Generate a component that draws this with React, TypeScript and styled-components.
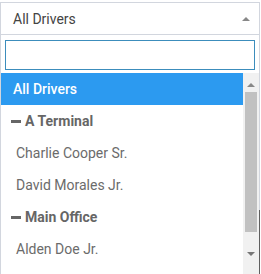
import React from "react";
import styled, { createGlobalStyle } from "styled-components";

const Global = createGlobalStyle`
  html, body { margin: 0; padding: 0; background: #fff; }
  body { font-family: Roboto, "Liberation Sans", sans-serif; overflow: hidden; }
`;

const Wrapper = styled.div`
  padding-top: 2px;
  width: 260px;
  position: relative;
`;

const Header = styled.div`
  height: 31px;
  border: 1px solid #d2d6de;
  display: flex;
  align-items: center;
  justify-content: space-between;
  padding: 0 9px 0 12px;
  font-size: 14px;
  color: #444;
`;

const Caret = styled.span<{ $down?: boolean }>`
  width: 0;
  height: 0;
  border-left: 4px solid transparent;
  border-right: 4px solid transparent;
  ${(p) => (p.$down ? "border-top: 4px solid #777;" : "border-bottom: 4px solid #888;")}
`;

const Dropdown = styled.div`
  position: relative;
  border: 1px solid #d2d6de;
  border-top: none;
  height: 240px;
  display: flex;
  flex-direction: column;

  &::after {
    content: "";
    position: absolute;
    right: -1px;
    top: 175px;
    bottom: 0;
    width: 1px;
    background: #5f5f5f;
  }
`;

const SearchBox = styled.div`
  padding: 5px 4px 3px 4px;
`;

const SearchInput = styled.input`
  display: block;
  box-sizing: border-box;
  width: 100%;
  height: 30px;
  margin: 0;
  border: 1px solid #3c8dbc;
  outline: none;
  font: inherit;
  font-size: 14px;
  padding: 4px 6px;
`;

const Results = styled.div`
  display: flex;
  flex: 1;
  min-height: 0;
`;

const List = styled.ul`
  list-style: none;
  margin: 0;
  padding: 0;
  width: 242px;
  overflow: hidden;
`;

const Option = styled.li<{ $active?: boolean; $indent?: boolean }>`
  height: 32px;
  display: flex;
  align-items: center;
  padding-left: ${(p) => (p.$indent ? "15px" : "12px")};
  font-size: 14px;
  font-weight: ${(p) => (p.$active ? 500 : 400)};
  color: ${(p) => (p.$active ? "#fff" : "#6b6b6b")};
  background: ${(p) => (p.$active ? "#2c9af0" : "transparent")};
`;

const Group = styled.li`
  height: 32px;
  display: flex;
  align-items: center;
  gap: 4px;
  padding-left: 10px;
  font-size: 14px;
  font-weight: 700;
  color: #666;
`;

const Dash = styled.span`
  width: 10px;
  height: 3px;
  background: #666;
`;

const Scrollbar = styled.div`
  width: 16px;
  background: #f1f1f1;
  display: flex;
  flex-direction: column;
  align-items: center;
  padding-top: 10px;
`;

const Thumb = styled.div`
  width: 12px;
  height: 148px;
  margin: 5px 0 0 0;
  background: #c1c1c1;
`;

const DownArrow = styled.div`
  margin-top: 24px;
`;

export default function App() {
  return (
    <>
      <Global />
      <Wrapper>
        <Header>
          <span>All Drivers</span>
          <Caret />
        </Header>
        <Dropdown>
          <SearchBox>
            <SearchInput type="text" />
          </SearchBox>
          <Results>
            <List>
              <Option $active>All Drivers</Option>
              <Group>
                <Dash />
                A Terminal
              </Group>
              <Option $indent>Charlie Cooper Sr.</Option>
              <Option $indent>David Morales Jr.</Option>
              <Group>
                <Dash />
                Main Office
              </Group>
              <Option $indent>Alden Doe Jr.</Option>
            </List>
            <Scrollbar>
              <Caret />
              <Thumb />
              <DownArrow>
                <Caret $down />
              </DownArrow>
            </Scrollbar>
          </Results>
        </Dropdown>
      </Wrapper>
    </>
  );
}
